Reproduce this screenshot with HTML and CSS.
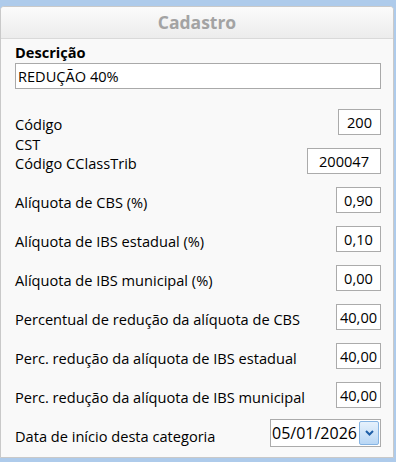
FILE: index.html
```html
<!DOCTYPE html>
<html lang="pt-BR">
  <head>
    <meta charset="UTF-8" />
    <meta name="viewport" content="width=device-width, initial-scale=1.0" />
    <title>Cadastro</title>
    <link rel="stylesheet" href="styles.css">
  </head>
  <body>
    <div class="window">
      <div class="window-header">Cadastro</div>

      <div class="form-body">
        <label class="desc-label" for="descricao">Descrição</label>
        <input type="text" id="descricao" class="desc-input" value="REDUÇÃO 40%" />

        <div class="row first">
          <span class="label">Código</span>
          <input type="text" class="field w-code" value="200" />
        </div>
        <div class="row">
          <span class="label">CST<br />Código CClassTrib</span>
          <input type="text" class="field w-class" value="200047" />
        </div>
        <div class="row">
          <span class="label">Alíquota de CBS (%)</span>
          <input type="text" class="field w-num" value="0,90" />
        </div>
        <div class="row">
          <span class="label">Alíquota de IBS estadual (%)</span>
          <input type="text" class="field w-num" value="0,10" />
        </div>
        <div class="row">
          <span class="label">Alíquota de IBS municipal (%)</span>
          <input type="text" class="field w-num" value="0,00" />
        </div>
        <div class="row">
          <span class="label">Percentual de redução da alíquota de CBS</span>
          <input type="text" class="field w-num" value="40,00" />
        </div>
        <div class="row">
          <span class="label">Perc. redução da alíquota de IBS estadual</span>
          <input type="text" class="field w-num" value="40,00" />
        </div>
        <div class="row">
          <span class="label">Perc. redução da alíquota de IBS municipal</span>
          <input type="text" class="field w-num" value="40,00" />
        </div>
        <div class="row date-row">
          <span class="label">Data de início desta categoria</span>
          <div class="date-box">
            <span class="date-value">05/01/2026</span>
            <span class="date-btn">
              <svg width="9" height="6" viewBox="0 0 9 6">
                <path d="M1 1 L4.5 4.5 L8 1" fill="none" stroke="#1f5fa8" stroke-width="2" />
              </svg>
            </span>
          </div>
        </div>
      </div>
    </div>
  </body>
</html>
```

FILE: styles.css
```css
body {
  margin: 0;
  background: #aecbeb;
  font-family: "Open Sans", "Noto Sans", sans-serif;
  font-size: 14.6px;
  color: #000;
}
.window {
  margin: 6px 2px 0 0;
  height: 452px;
  background: #f9f9f9;
  border: 1px solid #c9c9c9;
  border-radius: 4px 4px 0 0;
  box-sizing: border-box;
  overflow: hidden;
}
.window-header {
  height: 31px;
  line-height: 31px;
  text-align: center;
  font-weight: bold;
  font-size: 17.5px;
  color: #a3a3a3;
  background: linear-gradient(#fbfbfb, #ececec);
  border-bottom: 1px solid #d9d9d9;
}
.form-body {
  padding: 4px 12px 0 14px;
}
.desc-label {
  display: block;
  font-weight: bold;
  line-height: 19px;
}
.desc-input {
  display: block;
  width: 100%;
  height: 26px;
  margin-top: 1px;
  box-sizing: border-box;
  border: 1px solid #a9a9a9;
  background: #fff;
  padding: 0 2px;
  font-family: inherit;
  font-size: 14.6px;
  color: #000;
  outline: none;
}
.row {
  display: flex;
  justify-content: space-between;
  align-items: flex-end;
  height: 26px;
  margin-top: 13px;
}
.row.first {
  margin-top: 20px;
}
.label {
  line-height: 19px;
  padding-bottom: 1px;
  white-space: nowrap;
}
.field {
  height: 26px;
  box-sizing: border-box;
  border: 1px solid #ababab;
  background: #fff;
  padding: 0;
  text-align: center;
  font-family: inherit;
  font-size: 14.6px;
  color: #000;
  outline: none;
}
.w-code {
  width: 43px;
}
.w-class {
  width: 74px;
}
.w-num {
  width: 45px;
}
.date-row {
  height: 28px;
  margin-top: 11px;
}
.date-box {
  display: flex;
  align-items: center;
  width: 111px;
  height: 28px;
  box-sizing: border-box;
  border: 1px solid #ababab;
  background: #fff;
  padding: 0 1px 0 1px;
}
.date-value {
  flex: 1;
  font-size: 16px;
}
.date-btn {
  display: flex;
  justify-content: center;
  align-items: center;
  width: 18px;
  height: 22px;
  border: 1px solid #86b4e3;
  border-radius: 2px;
  background: linear-gradient(#e6f1fc, #b9d7f5);
}
```
